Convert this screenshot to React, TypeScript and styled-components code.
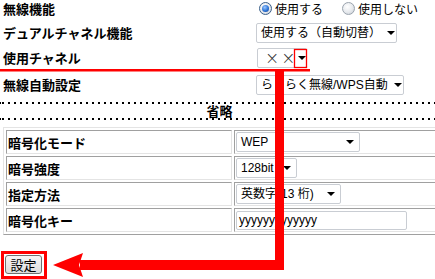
import React from 'react'
import styled, { createGlobalStyle } from 'styled-components'

const GlobalStyle = createGlobalStyle`
  html, body {
    margin: 0;
    padding: 0;
    background: #fff;
    overflow: hidden;
  }
  body {
    font-family: "Liberation Sans", "Noto Sans CJK JP", sans-serif;
    color: #000;
  }
`

const Page = styled.div`
  position: relative;
  width: 435px;
  height: 279px;
  overflow: hidden;
`

const TopForm = styled.div`
  display: flex;
  flex-direction: column;
  padding-left: 3px;
`

const FormRow = styled.div<{ $height: number; $gap: number }>`
  display: grid;
  grid-template-columns: 253px auto;
  align-items: center;
  height: ${({ $height }) => $height}px;
  margin-top: ${({ $gap }) => $gap}px;
`

const Label = styled.div`
  font-family: "Noto Sans CJK JP", sans-serif;
  font-size: 13px;
  font-weight: 700;
  line-height: 16px;
  white-space: nowrap;
`

const RadioGroup = styled.div`
  display: flex;
  align-items: center;
  font-family: "Noto Sans CJK JP", sans-serif;
  font-size: 12px;
  line-height: 16px;
`

const RadioOption = styled.label`
  display: flex;
  align-items: center;
  gap: 3px;
  margin-left: 3px;
  margin-right: 16px;
`

const Radio = styled.span<{ $checked?: boolean }>`
  position: relative;
  width: 11px;
  height: 11px;
  border-radius: 50%;
  border: 1px solid ${({ $checked }) => ($checked ? '#3a5f8a' : '#9aa3ad')};
  background: radial-gradient(circle at 40% 35%, #ffffff 0%, #e6e9ed 55%, #c2c8cf 100%);
  &::after {
    content: '';
    display: ${({ $checked }) => ($checked ? 'block' : 'none')};
    position: absolute;
    left: 2px;
    top: 2px;
    width: 7px;
    height: 7px;
    border-radius: 50%;
    background: radial-gradient(circle at 40% 35%, #9cc8ff 0%, #2b73d6 55%, #133e86 100%);
  }
`

const SelectBox = styled.div<{ $width: number; $pad?: number }>`
  box-sizing: border-box;
  display: flex;
  align-items: center;
  justify-content: space-between;
  width: ${({ $width }) => $width}px;
  height: 20px;
  padding: 0 ${({ $pad = 5 }) => $pad}px 0 4px;
  border: 1px solid #c9cdd3;
  border-radius: 2px;
  background: #fff;
  font-size: 12px;
  line-height: 16px;
  white-space: nowrap;
  overflow: hidden;
`

const Caret = styled.span<{ $gap?: number }>`
  flex: none;
  width: 0;
  height: 0;
  border-left: 4px solid transparent;
  border-right: 4px solid transparent;
  border-top: 4px solid #000;
  margin-left: ${({ $gap = 6 }) => $gap}px;
`

const Crosses = styled.span`
  flex: none;
  font-family: "DejaVu Sans", sans-serif;
  font-size: 17px;
  font-weight: 300;
  letter-spacing: 2px;
  line-height: 16px;
  color: #333;
  padding-left: 3px;
`

const Divider = styled.div`
  margin-top: 7px;
`

const DottedLine = styled.div`
  height: 2px;
  background-image: repeating-linear-gradient(to right, #000 0 2px, transparent 2px 6px);
  background-position: 2px 0;
`

const Summary = styled.div`
  height: 14px;
  line-height: 14px;
  text-align: center;
  padding-left: 4px;
  font-family: "Noto Sans CJK JP", sans-serif;
  font-size: 13px;
  font-weight: 700;
`

const SettingsTable = styled.table`
  margin: 7px 0 0 3px;
  width: 445px;
  border-collapse: separate;
  border-spacing: 2px;
  border: 1px solid;
  border-color: #e4e4e4 #a0a0a0 #a0a0a0 #e4e4e4;
`

const Cell = styled.td<{ $label?: boolean }>`
  box-sizing: border-box;
  height: 24px;
  padding: 1px;
  border: 1px solid;
  border-color: #a0a0a0 #e4e4e4 #e4e4e4 #a0a0a0;
  width: ${({ $label }) => ($label ? '226px' : 'auto')};
  font-family: ${({ $label }) => ($label ? '"Noto Sans CJK JP", sans-serif' : 'inherit')};
  font-size: 13px;
  font-weight: ${({ $label }) => ($label ? 700 : 400)};
  vertical-align: middle;
  white-space: nowrap;
`

const TextInput = styled.div<{ $width: number }>`
  box-sizing: border-box;
  width: ${({ $width }) => $width}px;
  height: 19px;
  margin-top: 1px;
  padding-left: 2px;
  border: 1px solid #c9cdd3;
  border-radius: 2px;
  font-size: 12px;
  line-height: 17px;
`

const Footer = styled.div`
  padding: 20px 0 0 5px;
`

const SubmitButton = styled.button`
  box-sizing: border-box;
  width: 37px;
  height: 19px;
  padding: 0;
  border: 1px solid #707070;
  border-radius: 3px;
  background: linear-gradient(#f6f6f6, #dcdcdc);
  font-family: "Noto Sans CJK JP", sans-serif;
  font-size: 13px;
  line-height: 15px;
  color: #000;
`

const Annotation = styled.svg`
  position: absolute;
  left: 0;
  top: 0;
  pointer-events: none;
`

const rows = [
  { label: '暗号化モード', value: <SelectBox $width={124}>WEP<Caret /></SelectBox> },
  { label: '暗号強度', value: <SelectBox $width={61}>128bit<Caret /></SelectBox> },
  { label: '指定方法', value: <SelectBox $width={105}>英数字(13 桁)<Caret /></SelectBox> },
  { label: '暗号化キー', value: <TextInput $width={171}>yyyyyyyyyyyyy</TextInput> },
]

export default function App() {
  return (
    <Page>
      <GlobalStyle />
      <TopForm>
        <FormRow $height={17} $gap={0}>
          <Label>無線機能</Label>
          <RadioGroup>
            <RadioOption>
              <Radio $checked />
              使用する
            </RadioOption>
            <RadioOption>
              <Radio />
              使用しない
            </RadioOption>
          </RadioGroup>
        </FormRow>
        <FormRow $height={20} $gap={6}>
          <Label>デュアルチャネル機能</Label>
          <SelectBox $width={141}>使用する（自動切替）<Caret /></SelectBox>
        </FormRow>
        <FormRow $height={20} $gap={5}>
          <Label>使用チャネル</Label>
          <SelectBox $width={50} $pad={3} style={{ marginLeft: 1 }}>
            <Crosses>××</Crosses>
            <Caret $gap={0} />
          </SelectBox>
        </FormRow>
        <FormRow $height={20} $gap={7}>
          <Label>無線自動設定</Label>
          <SelectBox $width={148}>らくらく無線/WPS自動<Caret /></SelectBox>
        </FormRow>
      </TopForm>

      <Divider>
        <DottedLine />
        <Summary>省略</Summary>
        <DottedLine />
      </Divider>

      <SettingsTable>
        <tbody>
          {rows.map(row => (
            <tr key={row.label}>
              <Cell $label>{row.label}</Cell>
              <Cell>{row.value}</Cell>
            </tr>
          ))}
        </tbody>
      </SettingsTable>

      <Footer>
        <SubmitButton>設定</SubmitButton>
      </Footer>

      <Annotation width="435" height="279" viewBox="0 0 435 279">
        <rect x="0" y="69" width="310" height="2.5" fill="#f00" />
        <rect x="294.5" y="49.5" width="12" height="18" fill="none" stroke="#f00" strokeWidth="1.3" />
        <rect x="275" y="70" width="9" height="200" fill="#f00" />
        <rect x="80" y="260" width="204" height="10" fill="#f00" />
        <polygon points="53,265 83,253 79,265 83,277" fill="#f00" />
        <rect x="2.5" y="252.5" width="43" height="25" fill="none" stroke="#f00" strokeWidth="3" />
      </Annotation>
    </Page>
  )
}
